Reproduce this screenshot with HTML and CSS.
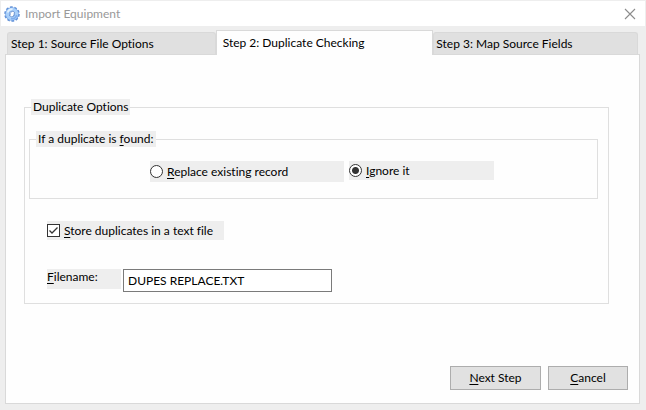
FILE: index.html
```html
<!DOCTYPE html>
<html lang="en">
<head>
    <meta charset="UTF-8">
    <meta name="viewport" content="width=device-width, initial-scale=1.0">
    <title>Import Equipment</title>
    <link rel="stylesheet" href="styles.css">
</head>
<body>
    <div class="window">
        <header class="titlebar">
            <svg class="app-icon" width="16" height="16" viewBox="0 0 16 16" aria-hidden="true">
                <circle cx="8" cy="8" r="6.8" fill="none" stroke="#5f8fd6" stroke-width="2" stroke-dasharray="2.6 1.67"/>
                <circle cx="8" cy="8" r="4.6" fill="none" stroke="#6f9fe2" stroke-width="4.4"/>
                <circle cx="8" cy="8" r="4.6" fill="none" stroke="#a9d0fa" stroke-width="3.2"/>
                <path d="M3.6 6.5A4.8 4.8 0 0 1 8.6 3.2" fill="none" stroke="#e2f1ff" stroke-width="1.8"/>
                <path d="M12.6 9A4.8 4.8 0 0 1 7 12.7" fill="none" stroke="#7fadec" stroke-width="1.6"/>
                <ellipse cx="8.2" cy="8" rx="2" ry="3" transform="rotate(20 8 8)" fill="#fff" stroke="#5583c8" stroke-width="0.7"/>
            </svg>
            <h1>Import Equipment</h1>
            <button type="button" class="close" aria-label="Close">
                <svg width="12" height="12" viewBox="0 0 12 12" aria-hidden="true">
                    <path d="M1 1L11 11M11 1L1 11" stroke="#8c8c8c" stroke-width="1.1"/>
                </svg>
            </button>
        </header>

        <div class="tabs" role="tablist">
            <button type="button" class="tab" role="tab">Step 1: Source File Options</button>
            <button type="button" class="tab active" role="tab" aria-selected="true">Step 2: Duplicate Checking</button>
            <button type="button" class="tab" role="tab">Step 3: Map Source Fields</button>
        </div>

        <form class="panel">
            <fieldset class="options">
                <legend>Duplicate Options</legend>

                <fieldset class="found">
                    <legend>If a duplicate is <u>f</u>ound:</legend>
                    <div class="choices">
                        <label class="check replace"><input type="radio" name="found"><span><u>R</u>eplace existing record</span></label>
                        <label class="check ignore"><input type="radio" name="found" checked><span><u>I</u>gnore it</span></label>
                    </div>
                </fieldset>

                <label class="check store"><input type="checkbox" checked><span><u>S</u>tore duplicates in a text file</span></label>

                <div class="file-row">
                    <label for="filename"><u>F</u>ilename:</label>
                    <input type="text" id="filename" value="DUPES REPLACE.TXT">
                </div>
            </fieldset>

            <div class="actions">
                <button type="button" class="next"><u>N</u>ext Step</button>
                <button type="button" class="cancel"><u>C</u>ancel</button>
            </div>
        </form>
    </div>
</body>
</html>
```
FILE: styles.css
```css
* {
    box-sizing: border-box;
}
body {
    margin: 0;
    background-color: #eeeeee;
    color: #000;
    font-family: Lato, "Open Sans", sans-serif;
    font-size: 12px;
    line-height: 16px;
    font-variant-ligatures: none;
}
button, input {
    font: inherit;
    color: inherit;
    margin: 0;
}
u {
    text-underline-offset: 2px;
}
.window {
    display: flex;
    flex-direction: column;
    min-height: 100vh;
    padding: 1px 1px 6px;
}

/* Title bar */
.titlebar {
    display: flex;
    align-items: center;
    height: 25px;
    padding: 0 9px 0 3px;
    background-color: #fff;
}
h1 {
    flex: 1;
    margin: 0 0 0 5px;
    color: #999;
    font-size: 12px;
    font-weight: normal;
}
.close {
    display: flex;
    padding: 0;
    border: none;
    background: none;
}

/* Tabs */
.tabs {
    display: grid;
    grid-template-columns: 209fr 218fr 205fr;
    align-items: end;
    padding: 4px 7px 0 6px;
}
.tab {
    height: 22px;
    padding: 0 3px;
    border: 1px solid #d9d9d9;
    border-bottom: none;
    border-radius: 3px 3px 0 0;
    background-color: #e0e0e0;
    text-align: left;
    white-space: nowrap;
}
.tab:last-child {
    padding-left: 2px;
}
.tab.active {
    position: relative;
    height: 25px;
    margin-bottom: -1px;
    padding: 0 6px 1px;
    border-radius: 0;
    background-color: #fefefe;
}

/* Page */
.panel {
    display: flex;
    flex: 1;
    flex-direction: column;
    justify-content: space-between;
    margin: 0 5px 0 4px;
    padding: 44px 11px 13px 18px;
    border: 1px solid #d9d9d9;
    background-color: #fefefe;
}
fieldset {
    min-width: 0;
    margin: 0;
    border: 1px solid #dfdfdf;
}
legend {
    margin-left: 2px;
    padding: 0 2px;
    background-color: #eee;
}
.options {
    margin-right: 19px;
    padding: 16px 10px 11px 4px;
}
.found {
    padding: 14px 4px 16px;
}
.choices {
    display: flex;
    align-items: flex-start;
    gap: 5px;
    padding-left: 116px;
}
.check {
    display: flex;
    align-items: center;
    gap: 4px;
    height: 19px;
    background-color: #eee;
}
.check input {
    flex: none;
    appearance: none;
    width: 13px;
    height: 13px;
    border: 1px solid #333;
    background: #fff center no-repeat;
}
.check input[type="radio"] {
    border-radius: 50%;
}
.check input[type="radio"]:checked {
    background-image: radial-gradient(circle, #333 3px, transparent 4px);
}
.check input[type="checkbox"]:checked {
    background-image: url("data:image/svg+xml,%3Csvg xmlns='http://www.w3.org/2000/svg' width='11' height='11'%3E%3Cpath d='M1.5 5.5L4 8L9.5 2.5' fill='none' stroke='%23333' stroke-width='1.3'/%3E%3C/svg%3E");
}
.replace {
    width: 194px;
    height: 21px;
}
.ignore {
    width: 145px;
}
.store {
    width: 177px;
    margin: 22px 0 0 18px;
}
.file-row {
    display: flex;
    align-items: flex-start;
    gap: 2px;
    margin: 29px 0 0 18px;
}
.file-row label {
    width: 74px;
    height: 20px;
    background-color: #eee;
}
.file-row input {
    width: 209px;
    height: 23px;
    padding: 0 4px;
    border: 1px solid #7a7a7a;
    background-color: #fff;
}

/* Buttons */
.actions {
    display: flex;
    justify-content: flex-end;
    gap: 7px;
}
.actions button {
    width: 80px;
    height: 24px;
    padding: 0;
    border: 1px solid #adadad;
    background-color: #e1e1e1;
}
.actions .next {
    width: 91px;
}
```
